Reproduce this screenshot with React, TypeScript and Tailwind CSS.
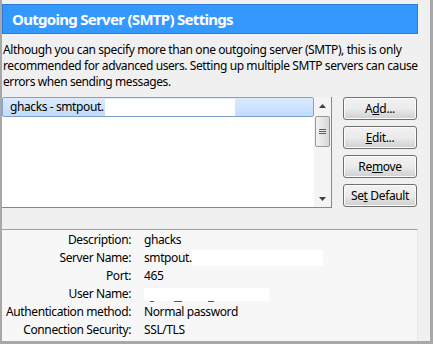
import React from "react";

const font = { fontFamily: '"Segoe UI", "Noto Sans", Arial, sans-serif' };

function Btn({ pre, u, post }: { pre: string; u: string; post: string }) {
  return (
    <button className="h-[23px] w-[74px] whitespace-nowrap rounded-[3px] border border-[#707070] bg-gradient-to-b from-[#f2f2f2] via-[#ebebeb] to-[#cfcfcf] text-[12px] leading-[21px] tracking-[-0.35px] text-black shadow-[inset_0_0_0_1px_#fcfcfc]">
      {pre}
      <span className="underline">{u}</span>
      {post}
    </button>
  );
}

function Row({ label, children }: { label: string; children: React.ReactNode }) {
  return (
    <div className="flex h-[18px] items-center whitespace-nowrap">
      <div className="w-[129px] shrink-0 text-right">{label}</div>
      <div className="ml-[13px] flex items-center">{children}</div>
    </div>
  );
}

export default function App() {
  return (
    <div
      style={font}
      className="flex h-[344px] w-[433px] flex-col border-b-[3px] border-l-2 border-r-[3px] border-[#a8a8a8] bg-[#f0f0f0] pr-[12px] pt-[4px] text-[12px] tracking-[-0.4px] text-black"
    >
      <div className="flex h-[30px] shrink-0 items-center border border-[#2e7ad6] bg-[#3399ff] pl-[9px] text-[15px] font-bold tracking-[-0.7px] text-white">
        Outgoing Server (SMTP) Settings
      </div>
      <div className="-mr-[8px] mt-[8px] pl-[1px] leading-[16px]">
        Although you can specify more than one outgoing server (SMTP), this is only recommended for advanced users. Setting up multiple SMTP servers can cause errors when sending messages.
      </div>
      <div className="mt-[7px] flex">
        <div className="flex h-[111px] w-[330px] border-b border-r border-[#828790] bg-white">
          <div className="flex-1">
            <div className="flex h-[20px] items-center rounded-[2px] border border-[#7da2ce] bg-gradient-to-b from-[#dcebfc] to-[#c1dbfc] pl-[7px]">
              <span>ghacks - smtpout.</span>
              <span className="ml-[1px] h-[17px] w-[130px] bg-white" />
            </div>
          </div>
          <div className="flex w-[17px] flex-col bg-[#f4f4f4]">
            <div className="flex h-[17px] items-center justify-center">
              <svg width="7" height="4" viewBox="0 0 7 4"><path d="M0 4 L3.5 0 L7 4Z" fill="#404040" /></svg>
            </div>
            <div className="mx-[1px] mt-[2px] flex h-[31px] items-center justify-center rounded-[2px] border border-[#979797] bg-gradient-to-r from-[#f3f3f3] to-[#d8d8d8]">
              <svg width="7" height="7" viewBox="0 0 7 7">
                <path d="M0 1.5H7M0 3.5H7M0 5.5H7" stroke="#606060" strokeWidth="1" />
              </svg>
            </div>
            <div className="flex-1" />
            <div className="flex h-[17px] items-center justify-center">
              <svg width="7" height="4" viewBox="0 0 7 4"><path d="M0 0 L3.5 4 L7 0Z" fill="#404040" /></svg>
            </div>
          </div>
        </div>
        <div className="ml-[11px] flex flex-col gap-[6px]">
          <Btn pre="A" u="d" post="d..." />
          <Btn pre="" u="E" post="dit..." />
          <Btn pre="Re" u="m" post="ove" />
          <Btn pre="Se" u="t" post=" Default" />
        </div>
      </div>
      <div className="mt-[21px] flex-1 border-r border-t border-[#a0a0a0] border-r-[#e6e6e6] bg-[#f7f7f7] pt-[1px]">
        <Row label="Description:">ghacks</Row>
        <Row label="Server Name:">
          <span>smtpout.</span>
          <span className="h-[16px] w-[131px] bg-white" />
        </Row>
        <Row label="Port:">465</Row>
        <Row label="User Name:">
          <span className="relative h-[13px] w-[125px] bg-white">
            <span className="absolute bottom-[-1px] left-[6px] h-[1px] w-[4px] bg-[#555]" />
            <span className="absolute bottom-[-1px] left-[30px] h-[1px] w-[8px] bg-[#555]" />
            <span className="absolute bottom-[-1px] left-[64px] h-[1px] w-[6px] bg-[#555]" />
          </span>
        </Row>
        <Row label="Authentication method:">Normal password</Row>
        <Row label="Connection Security:">SSL/TLS</Row>
      </div>
    </div>
  );
}
